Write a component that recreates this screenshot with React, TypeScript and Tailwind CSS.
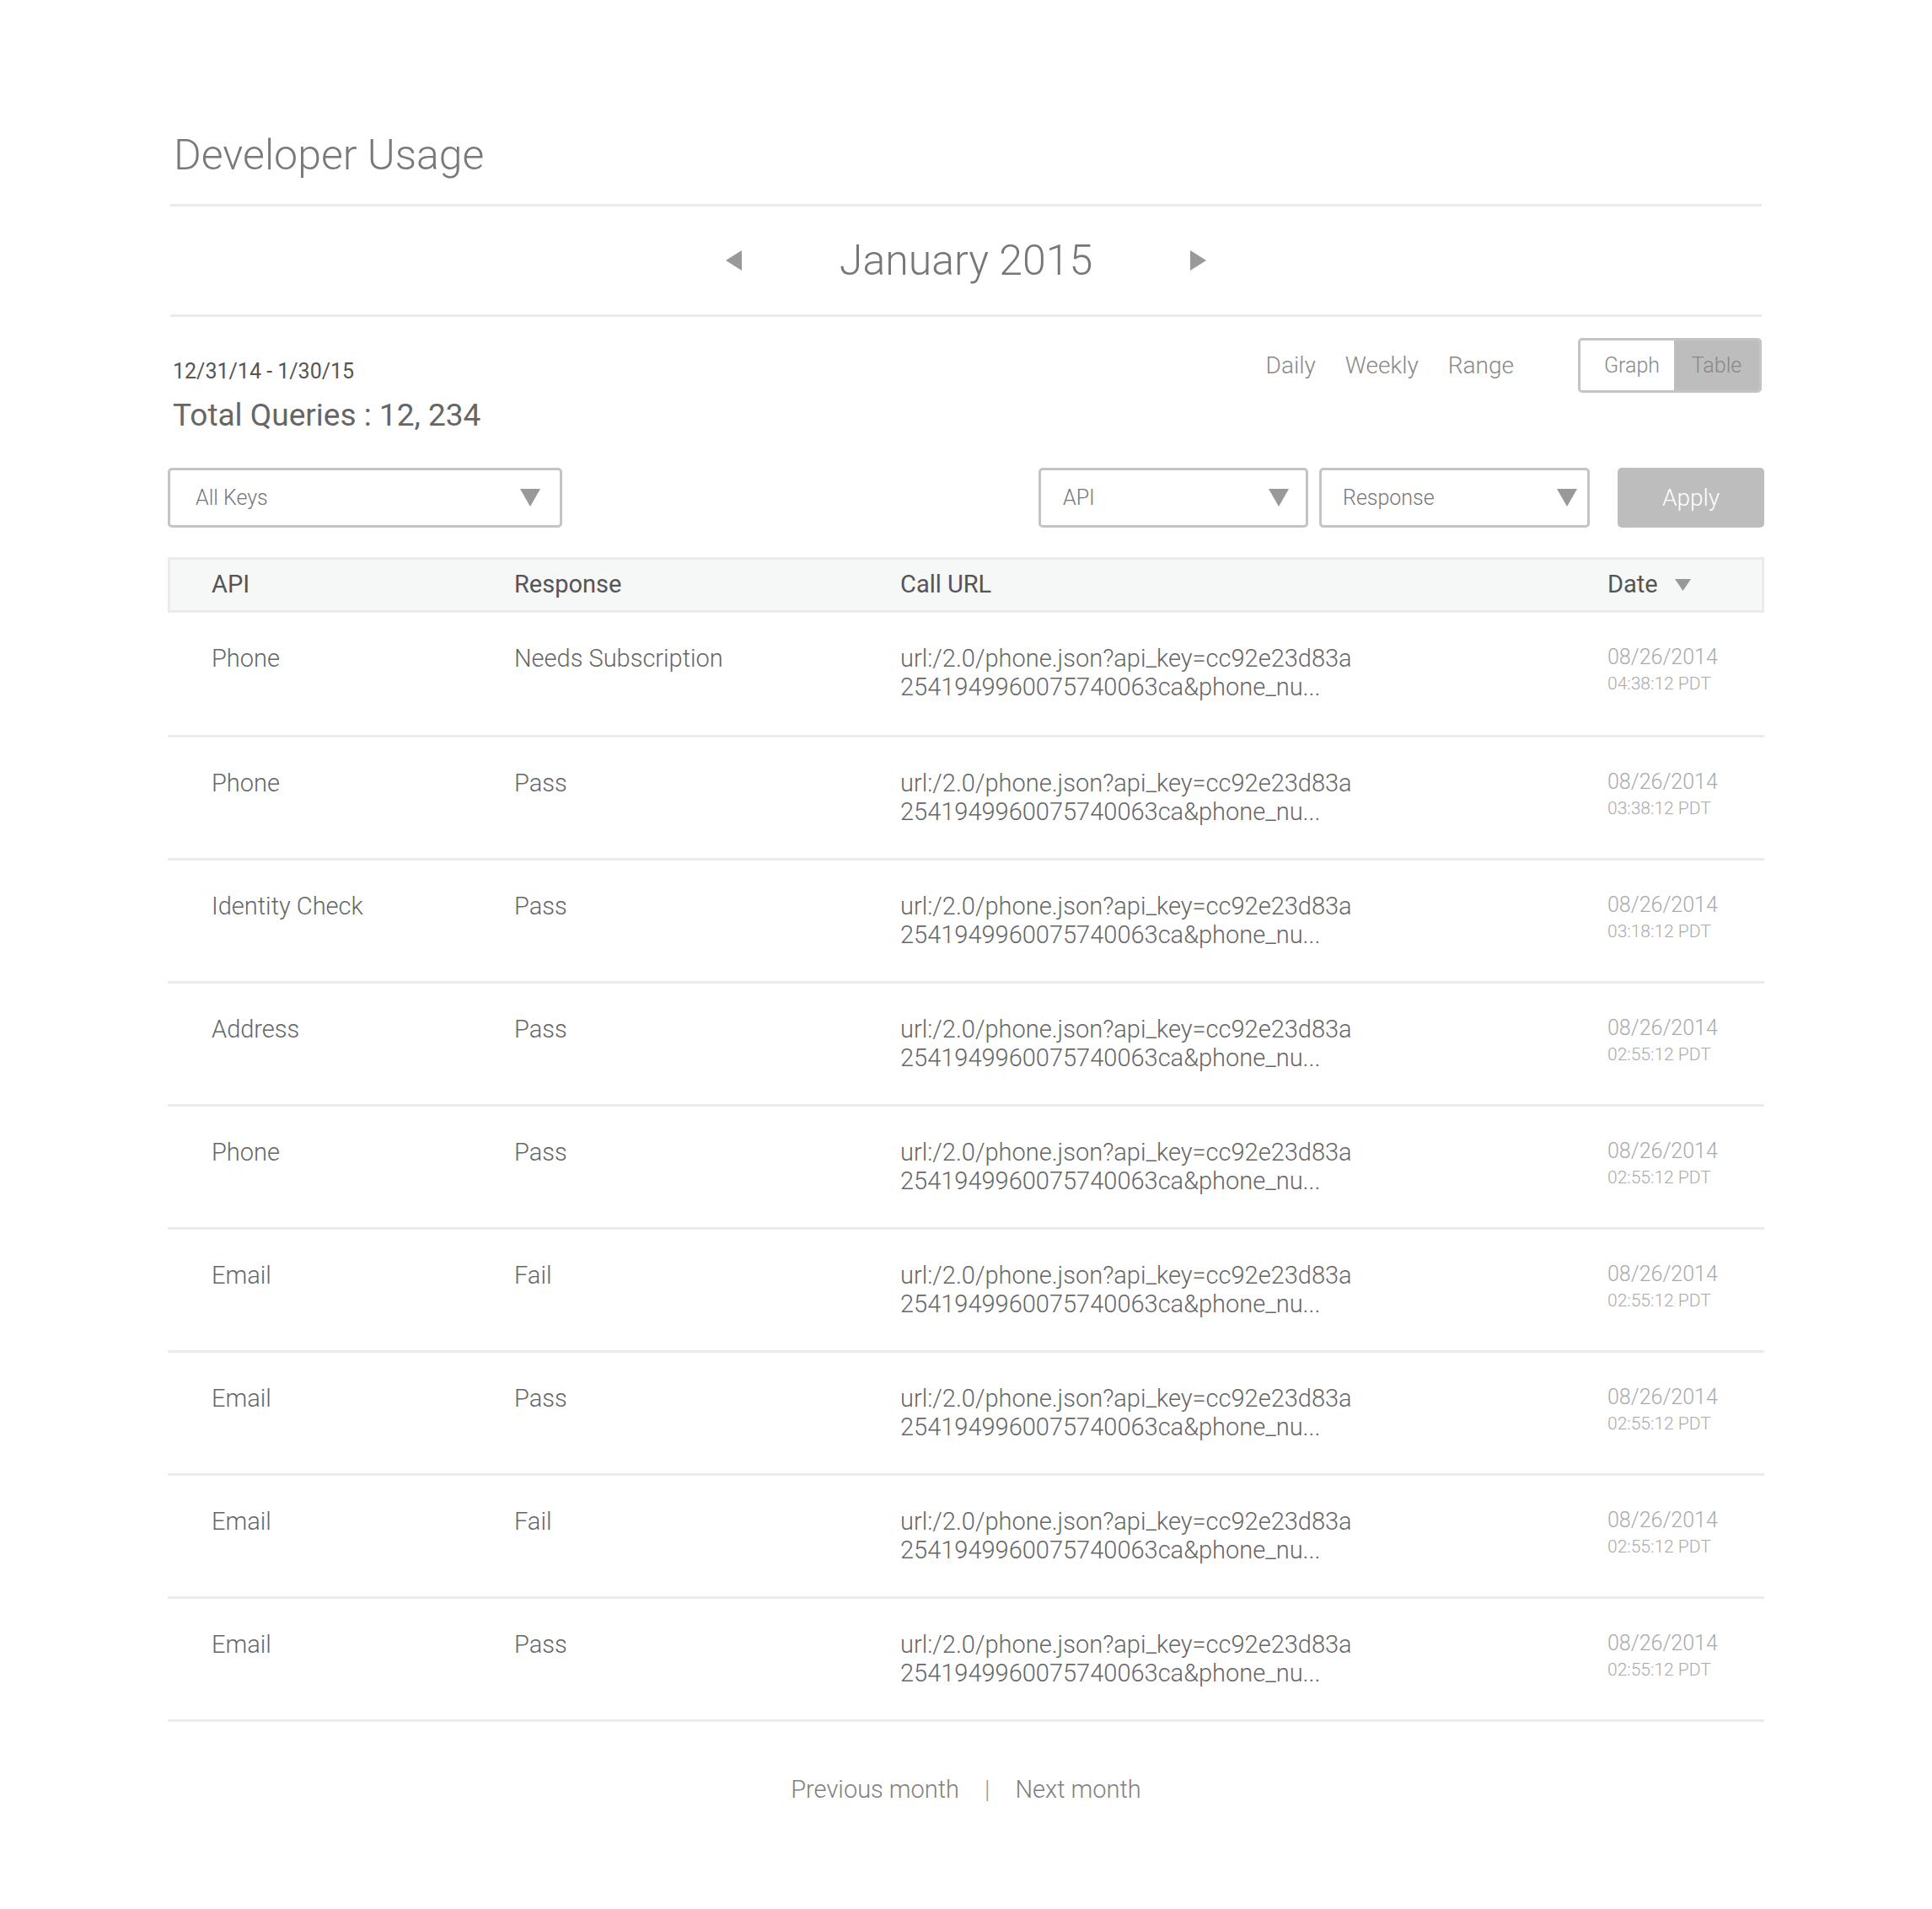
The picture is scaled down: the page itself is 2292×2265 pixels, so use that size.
import React from "react";

const rows = [
  { api: "Phone", res: "Needs Subscription", time: "04:38:12 PDT" },
  { api: "Phone", res: "Pass", time: "03:38:12 PDT" },
  { api: "Identity Check", res: "Pass", time: "03:18:12 PDT" },
  { api: "Address", res: "Pass", time: "02:55:12 PDT" },
  { api: "Phone", res: "Pass", time: "02:55:12 PDT" },
  { api: "Email", res: "Fail", time: "02:55:12 PDT" },
  { api: "Email", res: "Pass", time: "02:55:12 PDT" },
  { api: "Email", res: "Fail", time: "02:55:12 PDT" },
  { api: "Email", res: "Pass", time: "02:55:12 PDT" },
];

function Down({ w = 24, h = 21 }: { w?: number; h?: number }) {
  return (
    <svg width={w} height={h} viewBox={`0 0 ${w} ${h}`}>
      <polygon points={`0,0 ${w},0 ${w / 2},${h}`} fill="#999" />
    </svg>
  );
}

function Select({ label, w, pl, pr }: { label: string; w: string; pl: string; pr: string }) {
  return (
    <div
      className={`${w} ${pl} ${pr} flex h-[71px] items-center justify-between rounded-[5px] border-[3px] border-[#c4c4c4]`}
    >
      <span className="text-[25px] font-light text-[#777]">{label}</span>
      <Down />
    </div>
  );
}

export default function App() {
  return (
    <div className="min-h-[2265px] bg-white font-['Roboto',sans-serif]">
      <div className="mx-auto w-[1894px] pt-[155px]">
        <h1 className="pl-[7px] text-[50px] font-light leading-[58px] text-[#797979]">
          Developer Usage
        </h1>
        <div className="mx-[3px] mt-[29px] h-[3px] bg-[#ebebeb]" />

        <div className="flex h-[128px] items-center justify-center gap-[116px]">
          <svg width="19" height="24" viewBox="0 0 19 24">
            <polygon points="19,0 19,24 0,12" fill="#999" />
          </svg>
          <span className="text-[50px] font-light leading-[60px] text-[#777]">
            January 2015
          </span>
          <svg width="19" height="24" viewBox="0 0 19 24">
            <polygon points="0,0 0,24 19,12" fill="#999" />
          </svg>
        </div>
        <div className="mx-[3px] h-[3px] bg-[#ebebeb]" />

        <div className="flex h-[179px] justify-between">
          <div className="pl-[6px] pt-[50px]">
            <div className="text-[25px] leading-[30px] text-[#555]">
              12/31/14 - 1/30/15
            </div>
            <div className="mt-[15px] text-[37px] leading-[44px] text-[#666]">
              Total Queries : 12, 234
            </div>
          </div>
          <div className="flex items-start pr-[3px] pt-[25px]">
            <div className="flex h-[65px] items-center text-[28px] font-light text-[#888]">
              <span className="mr-[35px]">Daily</span>
              <span className="mr-[35px]">Weekly</span>
              <span>Range</span>
            </div>
            <div className="ml-[76px] flex h-[65px] w-[218px] overflow-hidden rounded-[5px] border-[3px] border-[#c4c4c4]">
              <div className="flex w-[111px] items-center bg-white pl-[28px] text-[25px] font-light text-[#888]">
                Graph
              </div>
              <div className="flex flex-1 items-center justify-center bg-[#bdbdbd] text-[25px] font-light text-[#888]">
                Table
              </div>
            </div>
          </div>
        </div>

        <div className="flex items-center">
          <Select label="All Keys" w="w-[468px]" pl="pl-[30px]" pr="pr-[23px]" />
          <div className="ml-auto flex items-center gap-[13px]">
            <Select label="API" w="w-[320px]" pl="pl-[26px]" pr="pr-[20px]" />
            <Select label="Response" w="w-[321px]" pl="pl-[25px]" pr="pr-[12px]" />
            <div className="ml-[20px] flex h-[71px] w-[174px] items-center justify-center rounded-[5px] bg-[#bdbdbd] text-[28px] font-light text-white">
              Apply
            </div>
          </div>
        </div>

        <div className="mt-[35px]">
          <div className="grid h-[66px] grid-cols-[359px_458px_839px_1fr] items-center border-[3px] border-[#ebebeb] bg-[#f6f7f7] pl-[49px] text-[29px] text-[#555]">
            <span>API</span>
            <span>Response</span>
            <span>Call URL</span>
            <span className="flex items-center gap-[20px]">
              Date
              <Down w={19} h={14} />
            </span>
          </div>
          {rows.map((r, i) => (
            <div
              key={i}
              className={`grid ${i === 0 ? "h-[148px]" : "h-[146px]"} grid-cols-[359px_458px_839px_1fr] border-b-[3px] border-[#ebebeb] pl-[52px] pt-[37px] font-light text-[#666]`}
            >
              <span className="text-[29px] leading-[34px]">{r.api}</span>
              <span className="text-[29px] leading-[34px]">{r.res}</span>
              <div className="text-[29px] leading-[34px]">
                <div>url:/2.0/phone.json?api_key=cc92e23d83a</div>
                <div>2541949960075740063ca&amp;phone_nu...</div>
              </div>
              <div className="text-[#aaa]">
                <div className="text-[25px] leading-[32px]">08/26/2014</div>
                <div className="mt-[1px] text-[21px] leading-[28px]">{r.time}</div>
              </div>
            </div>
          ))}
        </div>

        <div className="mt-[63px] flex items-center justify-center gap-[30px] text-[29px] font-light leading-[34px] text-[#808080]">
          <span>Previous month</span>
          <span className="text-[#999]">|</span>
          <span>Next month</span>
        </div>
      </div>
    </div>
  );
}
